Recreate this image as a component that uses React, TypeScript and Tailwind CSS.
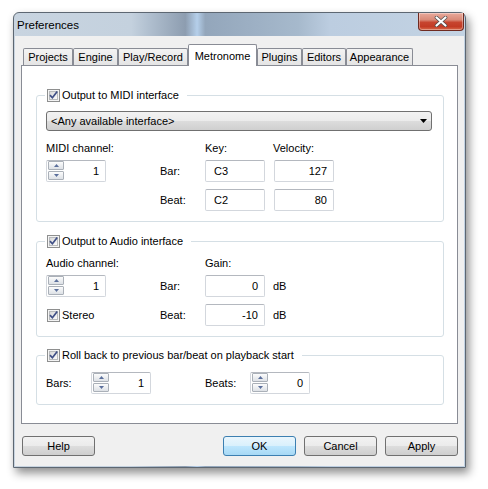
import React from "react"

const font = "font-[family-name:'Liberation_Sans',Arial,sans-serif]"

const tabs = [
  { name: "Projects", w: "w-[50px]" },
  { name: "Engine", w: "w-[45px]" },
  { name: "Play/Record", w: "w-[70px]" },
  { name: "Metronome", w: "w-[69px]", active: true },
  { name: "Plugins", w: "w-[45px]" },
  { name: "Editors", w: "w-[44px]" },
  { name: "Appearance", w: "w-[67px]" },
]

function Check() {
  return (
    <svg width="13" height="13" viewBox="0 0 13 13" className="shrink-0">
      <defs>
        <linearGradient id="cb" x1="0" y1="0" x2="1" y2="1">
          <stop offset="0" stopColor="#d6d6d6" />
          <stop offset="1" stopColor="#ffffff" />
        </linearGradient>
      </defs>
      <rect x="0.5" y="0.5" width="12" height="12" fill="#f4f4f4" stroke="#8e8f8f" />
      <rect x="2.5" y="2.5" width="8" height="8" fill="url(#cb)" stroke="#b9bbbd" />
      <path d="M3 6.2 L5.4 8.8 L10.2 2.6" fill="none" stroke="#3f4f86" strokeWidth="1.7" />
    </svg>
  )
}

function SpinBtn({ up }: { up?: boolean }) {
  return (
    <div className="flex h-[9px] w-[16px] items-center justify-center rounded-[1px] border border-[#aab0b8] bg-[linear-gradient(#fcfcfc,#dde1e6)]">
      <svg width="5" height="3" viewBox="0 0 5 3">
        <path d={up ? "M0 3 L2.5 0 L5 3 Z" : "M0 0 L2.5 3 L5 0 Z"} fill="#5b6f9c" />
      </svg>
    </div>
  )
}

function Spin({ value }: { value: string }) {
  return (
    <div className="flex h-[22px] w-[60px] shrink-0 rounded-[2px] border border-[#d3d7dd] border-t-[#b4b8bf] bg-white pl-px pr-[6px]">
      <div className="flex flex-col gap-px">
        <SpinBtn up />
        <SpinBtn />
      </div>
      <span className="ml-auto self-center">{value}</span>
    </div>
  )
}

function Field({ value, right }: { value: string; right?: boolean }) {
  return (
    <div
      className={`flex h-[22px] w-[60px] items-center rounded-[2px] border border-[#d3d7dd] border-t-[#b4b8bf] bg-white ${
        right ? "justify-end pr-[6px]" : "pl-[8px]"
      }`}
    >
      {value}
    </div>
  )
}

function Group({ title, children, className }: { title: string; children: React.ReactNode; className: string }) {
  return (
    <div className={`relative w-[408px] rounded-[3px] border border-[#d5dfe5] pl-[9px] ${className}`}>
      <div className="absolute left-[8px] top-[-8px] flex items-center gap-[2px] bg-white pl-[2px] pr-[8px]">
        <Check />
        <span className="leading-[14px]">{title}</span>
      </div>
      {children}
    </div>
  )
}

function Btn({ label, primary }: { label: string; primary?: boolean }) {
  return (
    <button
      className={`flex h-[20px] w-[73px] items-center justify-center rounded-[3px] border ${
        primary
          ? "border-[#3c7fb1] bg-[linear-gradient(#eaf6fd_0%,#d9f0fc_50%,#bee6fd_50%,#a7d9f5_100%)]"
          : "border-[#707070] bg-[linear-gradient(#f2f2f2_0%,#ebebeb_50%,#dddddd_50%,#cfcfcf_100%)]"
      }`}
    >
      {label}
    </button>
  )
}

export default function App() {
  return (
    <div className={`h-[489px] w-[488px] overflow-hidden bg-white pl-[13px] pt-[12px] text-[11px] text-black ${font}`}>
      <div className="flex h-[456px] w-[453px] flex-col rounded-t-[6px] border border-[#5d6772] bg-[linear-gradient(90deg,#c8d4e0_0%,#c4d1de_26%,#b0bfcf_30%,#8d9db0_38%,#b5cfea_40.6%,#93a6bb_42.4%,#a6b9cc_63%,#bccde0_70%,#c3d3e3_100%)] px-px pb-px shadow-[3px_5px_10px_rgba(0,0,0,0.45)]">
        {/* title bar */}
        <div className="flex h-[23px] shrink-0 items-start justify-between">
          <span className="pl-[2px] pt-[5px] text-[11.5px] leading-[14px] text-black">Preferences</span>
          <div className="flex h-[18px] w-[46px] items-center justify-center rounded-b-[4px] border border-t-0 border-[#6e2a20] bg-[linear-gradient(#e9a99b_0%,#d98a78_40%,#c7452f_55%,#c23a24_80%,#d86a4a_100%)] shadow-[inset_0_0_0_1px_rgba(255,255,255,0.35)]">
            <svg width="14" height="11" viewBox="0 0 14 11">
              <path d="M2.5 1.5 L11.5 9.5 M11.5 1.5 L2.5 9.5" stroke="#4a4a4a" strokeWidth="3.6" strokeLinecap="round" />
              <path d="M2.5 1.5 L11.5 9.5 M11.5 1.5 L2.5 9.5" stroke="#ffffff" strokeWidth="2.2" strokeLinecap="round" />
            </svg>
          </div>
        </div>

        {/* client area */}
        <div className="flex h-[430px] flex-col bg-[#f0f0f0] px-[6px] pt-[9px]">
          <div className="flex h-[20px] items-end pl-[2px]">
            {tabs.map((t) =>
              t.active ? (
                <div
                  key={t.name}
                  className={`relative z-10 mb-[-1px] flex h-[22px] ${t.w} items-start justify-center rounded-t-[2px] border border-b-0 border-[#898c95] bg-white pt-[3px]`}
                >
                  {t.name}
                </div>
              ) : (
                <div
                  key={t.name}
                  className={`flex h-[17px] ${t.w} items-center justify-center rounded-t-[2px] border border-b-0 border-[#898c95] bg-[linear-gradient(#f3f3f3,#e4e4e4)] pt-px`}
                >
                  {t.name}
                </div>
              )
            )}
          </div>

          <div className="flex h-[359px] w-[437px] flex-col border border-[#898c95] bg-white pl-[14px] pt-[29px]">
            <Group title="Output to MIDI interface" className="pb-[10px] pt-[15px]">
              <div className="flex h-[20px] w-[386px] items-center justify-between rounded-[3px] border border-[#707070] bg-[linear-gradient(#f2f2f2_0%,#ebebeb_50%,#dddddd_50%,#cfcfcf_100%)] pl-[4px] pr-[4px]">
                <span>&lt;Any available interface&gt;</span>
                <svg width="7" height="4" viewBox="0 0 7 4">
                  <path d="M0 0 L7 0 L3.5 4 Z" fill="#000" />
                </svg>
              </div>
              <div className="mt-[9px] grid h-[16px] grid-cols-[159px_69px_60px] items-center">
                <span>MIDI channel:</span>
                <span>Key:</span>
                <span className="-ml-px">Velocity:</span>
              </div>
              <div className="mt-[4px] grid grid-cols-[114px_45px_69px_60px] items-center">
                <Spin value="1" />
                <span>Bar:</span>
                <Field value="C3" />
                <Field value="127" right />
              </div>
              <div className="mt-[7px] grid grid-cols-[114px_45px_69px_60px] items-center">
                <span />
                <span>Beat:</span>
                <Field value="C2" />
                <Field value="80" right />
              </div>
            </Group>

            <Group title="Output to Audio interface" className="mt-[19px] pb-[10px] pt-[13px]">
              <div className="grid h-[16px] grid-cols-[159px_69px] items-center">
                <span>Audio channel:</span>
                <span>Gain:</span>
              </div>
              <div className="mt-[4px] grid grid-cols-[114px_45px_68px_40px] items-center">
                <Spin value="1" />
                <span>Bar:</span>
                <Field value="0" right />
                <span>dB</span>
              </div>
              <div className="mt-[7px] grid grid-cols-[114px_45px_68px_40px] items-center">
                <div className="flex items-center gap-[2px] pl-px">
                  <Check />
                  <span>Stereo</span>
                </div>
                <span>Beat:</span>
                <Field value="-10" right />
                <span>dB</span>
              </div>
            </Group>

            <Group title="Roll back to previous bar/beat on playback start" className="mt-[18px] pb-[10px] pt-[16px]">
              <div className="flex items-center">
                <span className="w-[45px]">Bars:</span>
                <Spin value="1" />
                <span className="w-[54px]" />
                <span className="w-[45px]">Beats:</span>
                <Spin value="0" />
              </div>
            </Group>
          </div>

          <div className="mt-[12px] flex items-center pl-px">
            <Btn label="Help" />
            <div className="ml-auto flex gap-[8px]">
              <Btn label="OK" primary />
              <Btn label="Cancel" />
              <Btn label="Apply" />
            </div>
          </div>
        </div>
      </div>
    </div>
  )
}
